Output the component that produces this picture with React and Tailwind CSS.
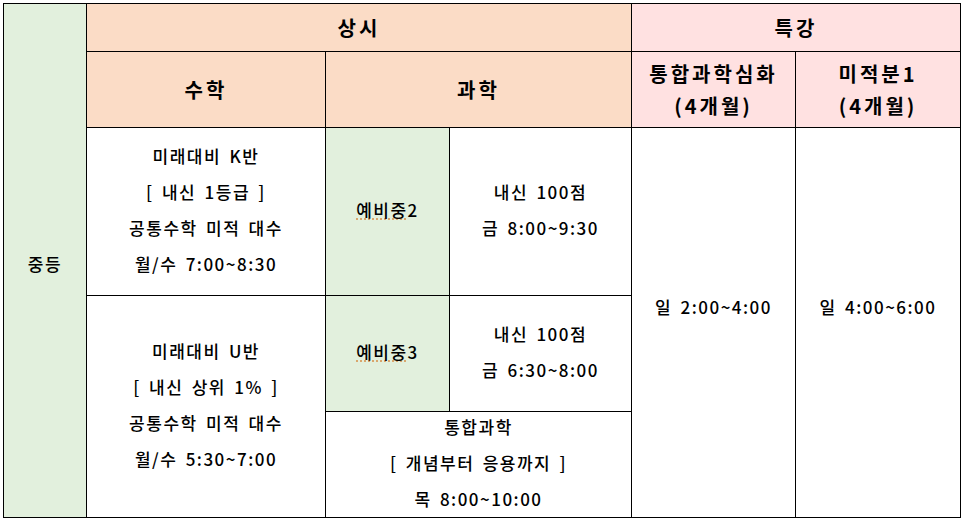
const FONT = { fontFamily: '"Noto Sans CJK KR", "Noto Sans", sans-serif' };

const HEAD = 'flex flex-col items-center justify-center text-[20px] font-bold tracking-[3px] leading-[32px] text-black';
const BODY = 'flex flex-col items-center justify-center text-[17px] font-medium tracking-[1.5px] [word-spacing:3px] leading-[36px] text-black';

const PEACH = 'bg-[#fbdcc6]';
const PINK = 'bg-[#ffe1e1]';
const GREEN = 'bg-[#e2f0dd]';

function Spell({ children }) {
  return (
    <span className="underline decoration-dotted decoration-[#d89a5a] underline-offset-2">{children}</span>
  );
}

export default function App() {
  return (
    <div className="w-[964px] h-[522px] bg-white pt-[3px] pl-[3px]" style={FONT}>
      <div className="grid w-fit grid-cols-[82px_238px_123px_181px_163px_164px] grid-rows-[47px_75px_167px_115px_105px] gap-px border border-black bg-black">
        {/* left label */}
        <div className={`${GREEN} ${BODY} row-span-5 pt-[6px]`}>중등</div>

        {/* header row 1 */}
        <div className={`${PEACH} ${HEAD} col-span-3`}>상시</div>
        <div className={`${PINK} ${HEAD} col-span-2`}>특강</div>

        {/* header row 2 */}
        <div className={`${PEACH} ${HEAD}`}>수학</div>
        <div className={`${PEACH} ${HEAD} col-span-2`}>과학</div>
        <div className={`${PINK} ${HEAD}`}>
          <span>통합과학심화</span>
          <span>(4개월)</span>
        </div>
        <div className={`${PINK} ${HEAD}`}>
          <span>미적분1</span>
          <span>(4개월)</span>
        </div>

        {/* body row 1 */}
        <div className={`bg-white ${BODY} pb-[3px]`}>
          <span>미래대비 K반</span>
          <span>[ 내신 1등급 ]</span>
          <span>공통수학 미적 대수</span>
          <span>월/수 7:00~8:30</span>
        </div>
        <div className={`${GREEN} ${BODY} pb-[3px]`}>
          <span><Spell>예비중</Spell>2</span>
        </div>
        <div className={`bg-white ${BODY} pb-[3px]`}>
          <span>내신 100점</span>
          <span>금 8:00~9:30</span>
        </div>
        <div className={`bg-white ${BODY} row-span-3 pb-[32px]`}>일 2:00~4:00</div>
        <div className={`bg-white ${BODY} row-span-3 pb-[32px]`}>일 4:00~6:00</div>

        {/* body row 2 */}
        <div className={`bg-white ${BODY} row-span-2 pb-[3px]`}>
          <span>미래대비 U반</span>
          <span>[ 내신 상위 1% ]</span>
          <span>공통수학 미적 대수</span>
          <span>월/수 5:30~7:00</span>
        </div>
        <div className={`${GREEN} ${BODY} pb-[3px]`}>
          <span><Spell>예비중</Spell>3</span>
        </div>
        <div className={`bg-white ${BODY} pb-[3px]`}>
          <span>내신 100점</span>
          <span>금 6:30~8:00</span>
        </div>

        {/* body row 3 */}
        <div className={`bg-white ${BODY} col-span-2 pb-[3px]`}>
          <span>통합과학</span>
          <span>[ 개념부터 응용까지 ]</span>
          <span>목 8:00~10:00</span>
        </div>
      </div>
    </div>
  );
}
